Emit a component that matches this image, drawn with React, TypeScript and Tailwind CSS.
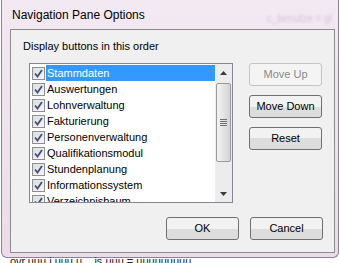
import React from "react";

const items = [
  "Stammdaten",
  "Auswertungen",
  "Lohnverwaltung",
  "Fakturierung",
  "Personenverwaltung",
  "Qualifikationsmodul",
  "Stundenplanung",
  "Informationssystem",
  "Verzeichnisbaum",
];

function Check() {
  return (
    <span className="flex h-[13px] w-[13px] shrink-0 items-center justify-center border border-[#8e8f8f] bg-gradient-to-br from-[#dcdee2] to-[#f6f6f6]">
      <svg width="9" height="9" viewBox="0 0 9 9">
        <path d="M1 4.5 L3.5 7.5 L8 1" fill="none" stroke="#3d4f7a" strokeWidth="1.8" />
      </svg>
    </span>
  );
}

function Btn({ label, disabled }: { label: string; disabled?: boolean }) {
  return (
    <button
      className={`h-[23px] w-[73px] rounded-[3px] border text-[11px] ${
        disabled
          ? "border-[#c2c4c6] bg-[#f4f4f4] text-[#8a8a8a]"
          : "border-[#707070] bg-gradient-to-b from-[#f2f2f2] from-50% to-[#dddddd] to-50% text-black"
      }`}
    >
      {label}
    </button>
  );
}

function ScrollBar() {
  return (
    <div className="flex w-[17px] shrink-0 flex-col bg-[#ececec]">
      <div className="flex h-[17px] items-center justify-center">
        <svg width="7" height="4" viewBox="0 0 7 4">
          <path d="M3.5 0 L7 4 L0 4 Z" fill="#3a3a3a" />
        </svg>
      </div>
      <div className="mx-[1px] mt-[2px] flex h-[79px] items-center justify-center rounded-[2px] border border-[#9a9a9a] bg-gradient-to-r from-[#f4f4f4] to-[#d4d4d4]">
        <div className="flex flex-col gap-[1px]">
          <div className="h-px w-[7px] bg-[#707070]" />
          <div className="h-px w-[7px] bg-[#707070]" />
          <div className="h-px w-[7px] bg-[#707070]" />
          <div className="h-px w-[7px] bg-[#707070]" />
        </div>
      </div>
      <div className="flex-1" />
      <div className="flex h-[17px] items-center justify-center">
        <svg width="7" height="4" viewBox="0 0 7 4">
          <path d="M0 0 L7 0 L3.5 4 Z" fill="#3a3a3a" />
        </svg>
      </div>
    </div>
  );
}

export default function App() {
  return (
    <div className="h-[263px] w-[340px] overflow-hidden bg-white font-['Liberation_Sans',sans-serif]">
      {/* Fensterrahmen */}
      <div className="ml-[1px] flex h-[258px] w-[338px] flex-col rounded-bl-[6px] rounded-br-[6px] border-b border-l border-r border-[#8a8296] bg-gradient-to-b from-[#f3e9f2] via-[#efe2ee] to-[#ecdcea]">
        <div className="flex h-[29px] items-center pl-[10px] pr-[6px]">
          <span className="text-[12px] text-black">Navigation Pane Options</span>
          <span className="ml-auto mt-[8px] text-[10px] text-[#d6c6d4] blur-[1px]">c_benutze = gl</span>
        </div>

        {/* Client-Bereich */}
        <div className="ml-[8px] flex h-[224px] w-[325px] flex-col border border-[#8c8c8c] bg-[#f0f0f0] pl-[12px] pt-[10px]">
          <div className="h-[13px] text-[11px] leading-[13px] text-black">Display buttons in this order</div>

          <div className="mt-[10px] flex">
            <div className="ml-[6px] flex h-[140px] w-[204px] border border-[#828790] bg-white">
              <div className="flex-1 overflow-hidden pt-[1px]">
                {items.map((it, i) => (
                  <div key={it} className="flex h-[16px] items-center pl-[2px]">
                    <Check />
                    <span
                      className={`ml-[1px] flex h-[16px] flex-1 items-center pl-[1px] text-[11px] ${
                        i === 0 ? "bg-[#3399ff] text-white" : "text-black"
                      }`}
                    >
                      {it}
                    </span>
                  </div>
                ))}
              </div>
              <ScrollBar />
            </div>

            <div className="ml-[16px] flex flex-col gap-[9px]">
              <Btn label="Move Up" disabled />
              <Btn label="Move Down" />
              <Btn label="Reset" />
            </div>
          </div>

          <div className="mt-[14px] flex justify-end gap-[11px] pr-[11px]">
            <Btn label="OK" />
            <Btn label="Cancel" />
          </div>
        </div>
      </div>

      {/* Hintergrund unter dem Fenster */}
      <div className="-mt-[1px] h-[6px] overflow-hidden whitespace-nowrap pl-[10px] text-[11px] leading-[11px] text-[#202020]">
        <span className="inline-block -translate-y-[1px]">ovr.uuu i.uuu u...   is.uuu = uuuuuuuuu</span>
      </div>
    </div>
  );
}
